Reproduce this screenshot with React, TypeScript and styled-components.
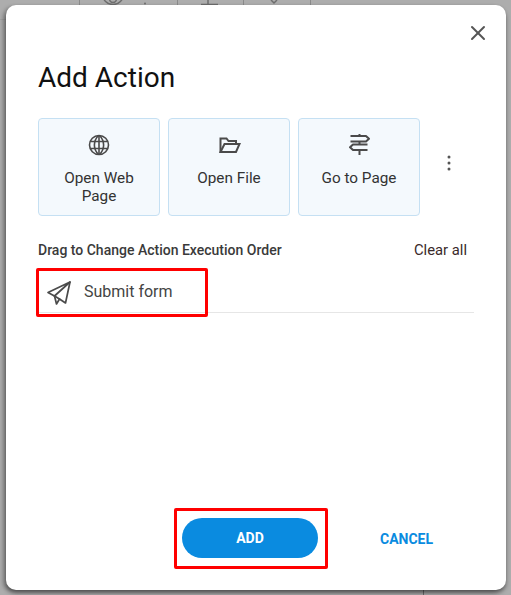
import React from "react";
import styled, { createGlobalStyle } from "styled-components";
import { TbX } from "react-icons/tb";

const GlobalStyle = createGlobalStyle`
	html, body {
		margin: 0;
		padding: 0;
		width: 511px;
		height: 595px;
		overflow: hidden;
		font-family: Roboto, "Liberation Sans", sans-serif;
	}
`;

const GlobeIcon = () => (
	<ActionIcon viewBox="0 0 24 24" strokeWidth="1.6">
		<circle cx="12" cy="12" r="9.500" />
		<path d="M3 8.500h18M3 15.500h18M12 2.500v19" />
		<path d="M11.500 2.500c-5.500 5.500-5.500 13.500 0 19M12.500 2.500c5.500 5.500 5.500 13.500 0 19" />
	</ActionIcon>
);

const FolderIcon = () => (
	<ActionIcon viewBox="0 0 24 24" strokeWidth="2" strokeLinejoin="miter">
		<path d="M3.500 19V5.500h6l2 2.500h7.500v3" />
		<path d="M3.500 19h15.500l3.500-8H7.500L3.500 19Z" />
	</ActionIcon>
);

const SignIcon = () => (
	<ActionIcon viewBox="0 0 24 24" strokeWidth="2" strokeLinejoin="round">
		<path d="M3.500 3H19l3 2.800-3 2.800H3.500" />
		<path d="M20.500 11.500H6l-3 2.800 3 2.800h14.500" />
		<path d="M12.500 1v2M12.500 8.600v2.900M12.500 17V22" />
	</ActionIcon>
);

const actions = [
	{ label: "Open Web Page", Icon: GlobeIcon },
	{ label: "Open File", Icon: FolderIcon },
	{ label: "Go to Page", Icon: SignIcon },
];

export default function App() {
	return (
		<Backdrop>
			<GlobalStyle />
			<Behind>
				<BehindCell $width={97}>
					<svg width="97" height="5" viewBox="0 0 97 5" fill="none" stroke="#6e6e6e" strokeWidth="1.500">
						<circle cx="33" cy="-6" r="10.500" />
						<circle cx="33" cy="-1" r="3.500" />
						<circle cx="65" cy="3.500" r="1" fill="#6e6e6e" stroke="none" />
					</svg>
				</BehindCell>
				<BehindCell $width={65}>
					<svg width="65" height="5" viewBox="0 0 65 5" fill="none" stroke="#6e6e6e" strokeWidth="1.500">
						<path d="M23 4.500h17M30 0v4.500" />
					</svg>
				</BehindCell>
				<BehindCell $width={66}>
					<svg width="66" height="5" viewBox="0 0 66 5" fill="none" stroke="#6e6e6e" strokeWidth="1.500">
						<path d="M27 0l3 3 3-3" />
					</svg>
				</BehindCell>
			</Behind>
			<SideRule />
			<FootRule />
			<Modal>
				<CloseRow>
					<CloseButton><TbX size={24} /></CloseButton>
				</CloseRow>
				<Title>Add Action</Title>
				<ActionRow>
					{actions.map(({ label, Icon }) => (
						<ActionCard key={label}>
							<Icon />
							<ActionLabel>{label}</ActionLabel>
						</ActionCard>
					))}
					<MoreButton>
						<svg width="4" height="16" viewBox="0 0 4 16" fill="#555">
							<circle cx="2" cy="2" r="1.500" />
							<circle cx="2" cy="8" r="1.500" />
							<circle cx="2" cy="14" r="1.500" />
						</svg>
					</MoreButton>
				</ActionRow>
				<OrderHeader>
					<OrderTitle>Drag to Change Action Execution Order</OrderTitle>
					<ClearAll>Clear all</ClearAll>
				</OrderHeader>
				<OrderItem>
					<Highlight>
						<svg width="26" height="26" viewBox="0 0 26 26" fill="none" stroke="#4a4a4a" strokeWidth="1.700" strokeLinejoin="round" strokeLinecap="round">
							<path d="M24 2 2 12.500l6.500 3.500L24 2Z" />
							<path d="M24 2 19.500 23 13.500 19 8.500 16" />
							<path d="M8.500 16l2 8 3-5" />
						</svg>
						<ItemLabel>Submit form</ItemLabel>
					</Highlight>
				</OrderItem>
				<Footer>
					<AddFrame>
						<AddButton>ADD</AddButton>
					</AddFrame>
					<CancelButton>CANCEL</CancelButton>
				</Footer>
			</Modal>
		</Backdrop>
	);
}

const Backdrop = styled.div`
	position: relative;
	width: 511px;
	height: 595px;
	box-sizing: border-box;
	padding: 5px 5px 5px 6px;
	background: #adadad;
	overflow: hidden;
`;
const Behind = styled.div`
	position: absolute;
	top: 0;
	left: 79px;
	display: flex;
	height: 5px;
	border-left: 1px solid #8a8a8a;
`;
const BehindCell = styled.div<{ $width: number }>`
	width: ${p => p.$width}px;
	height: 5px;
	border-right: 1px solid #8a8a8a;
	svg {
		display: block;
	}
`;
const SideRule = styled.div`
	position: absolute;
	top: 19px;
	left: 0;
	width: 6px;
	height: 1px;
	background: #a2a2a2;
`;
const FootRule = styled.div`
	position: absolute;
	bottom: 0;
	left: 423px;
	width: 1px;
	height: 5px;
	background: #6e6e6e;
`;
const Modal = styled.div`
	position: relative;
	display: flex;
	flex-direction: column;
	height: 585px;
	box-sizing: border-box;
	padding: 0 32px 0 32px;
	background: #fff;
	border-radius: 10px;
	box-shadow: -3px 2px 4px rgba(0, 0, 0, 0.25), 0 3px 4px rgba(0, 0, 0, 0.4);
`;
const CloseRow = styled.div`
	display: flex;
	justify-content: flex-end;
	height: 57px;
	padding-top: 16px;
	box-sizing: border-box;
	margin-right: -16px;
`;
const CloseButton = styled.button`
	display: flex;
	width: 24px;
	height: 24px;
	padding: 0;
	border: none;
	background: none;
	color: #555;
`;
const Title = styled.h2`
	margin: 0;
	height: 32px;
	font-size: 28px;
	line-height: 32px;
	font-weight: 400;
	color: #111;
`;
const ActionRow = styled.div`
	display: flex;
	gap: 8px;
	margin-top: 24px;
`;
const ActionCard = styled.div`
	display: flex;
	flex-direction: column;
	align-items: center;
	width: 122px;
	height: 98px;
	box-sizing: border-box;
	padding: 14px 8px 0;
	background: #f4f9fd;
	border: 1px solid #c5e0f3;
	border-radius: 4px;
	color: #4a4a4a;
`;
const ActionIcon = styled.svg`
	flex: none;
	width: 24px;
	height: 24px;
	fill: none;
	stroke: #4a4a4a;
`;
const ActionLabel = styled.div`
	margin-top: 12px;
	font-size: 15.3px;
	line-height: 18px;
	color: #333;
	text-align: center;
`;
const MoreButton = styled.div`
	display: flex;
	align-items: center;
	align-self: center;
	margin: -8px 0 0 19px;
`;
const OrderHeader = styled.div`
	display: flex;
	justify-content: space-between;
	align-items: center;
	margin-top: 24px;
	padding-right: 7px;
	height: 20px;
`;
const OrderTitle = styled.span`
	font-size: 14px;
	font-weight: 500;
	color: #3a3a3a;
`;
const ClearAll = styled.span`
	font-size: 14.8px;
	color: #3a2a2a;
`;
const OrderItem = styled.div`
	height: 43px;
	margin-top: 9px;
	border-bottom: 1px solid #e6e6e6;
`;
const Highlight = styled.div`
	display: flex;
	align-items: center;
	gap: 12px;
	width: 172px;
	height: 49px;
	margin: -1px 0 0 -2px;
	padding-left: 7px;
	box-sizing: border-box;
	border: 3px solid #f00;
	border-radius: 2px;
`;
const ItemLabel = styled.span`
	padding-bottom: 2px;
	font-size: 16px;
	color: #444;
`;
const Footer = styled.div`
	display: flex;
	align-items: center;
	margin: auto 0 21px 136px;
`;
const AddFrame = styled.div`
	box-sizing: border-box;
	width: 154px;
	height: 61px;
	padding: 7px 5px;
	border: 3px solid #f00;
	border-radius: 2px;
`;
const AddButton = styled.button`
	display: block;
	width: 136px;
	height: 40px;
	padding: 0;
	border: none;
	border-radius: 20px;
	background: #0a8be0;
	color: #fff;
	font: 700 14px Roboto, sans-serif;
`;
const CancelButton = styled.button`
	margin-left: 52px;
	padding: 0;
	border: none;
	background: none;
	color: #0a8be0;
	font: 700 14px Roboto, sans-serif;
`;
